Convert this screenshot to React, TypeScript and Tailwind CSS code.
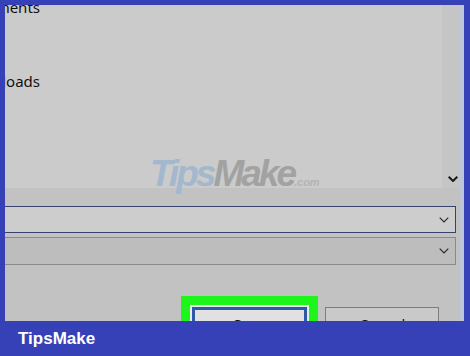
import React from "react";

const Chevron = ({ bold = false }: { bold?: boolean }) => (
  <svg width="10" height="6" viewBox="0 0 10 6" className="block">
    <polyline
      points="0.7,0.7 5,5 9.3,0.7"
      fill="none"
      stroke={bold ? "#1a1a1a" : "#2a2a2a"}
      strokeWidth={bold ? 2 : 1.2}
    />
  </svg>
);

export default function App() {
  return (
    <div className="w-[470px] h-[356px] bg-[#3641b7] flex flex-col overflow-hidden font-['Noto_Sans',sans-serif]">
      <div className="flex h-[321px] shrink-0 pt-[5px] pl-[5px] pr-[6px]">
        <div className="flex-1 flex bg-[#c2c2c2] relative overflow-hidden">
          <div className="flex-1 flex flex-col overflow-hidden">
            {/* list */}
            <div className="h-[183px] shrink-0 flex">
              <div className="flex-1 bg-[#cbcbcb] overflow-hidden flex flex-col text-[15px] leading-[20px] text-[#111]">
                <div className="shrink-0 mt-[-8px] w-[35px] overflow-hidden flex justify-end whitespace-nowrap">
                  <span>Documents</span>
                </div>
                <div className="shrink-0 mt-[54px] w-[35px] overflow-hidden flex justify-end whitespace-nowrap">
                  <span>Downloads</span>
                </div>
              </div>
              <div className="w-[18px] bg-[#c5c5c5] flex flex-col justify-end pl-[6px] pb-[6px]">
                <Chevron bold />
              </div>
            </div>
            <div className="h-[18px] shrink-0" />
            {/* field 1 */}
            <div className="h-[27px] shrink-0 mr-[4px] border border-l-0 border-[#37416f] bg-[#cdcdcd] flex items-center justify-end pr-[6px]">
              <Chevron />
            </div>
            <div className="h-[4px] shrink-0" />
            {/* field 2 */}
            <div className="h-[28px] shrink-0 mr-[4px] border border-l-0 border-[#8a8a8a] bg-[#bdbdbd] flex items-center justify-end pr-[6px]">
              <Chevron />
            </div>
            <div className="h-[31px] shrink-0" />
            {/* buttons */}
            <div className="flex shrink-0 items-start pl-[176px]">
              <div className="w-[137px] shrink-0 bg-[#1ef51a] p-[9px] pb-0">
                <div className="bg-[#e6ecee] p-[2px] pb-0">
                  <div className="h-[30px] border-[3px] border-b-0 border-[#2c5aa6] bg-[#e1e1e1] text-center text-[15px] leading-[20px] text-[#111] pt-[4px]">
                    Save
                  </div>
                </div>
              </div>
              <div className="ml-[7px] shrink-0 mt-[11px] w-[114px] h-[30px] border border-b-0 border-[#7d7d7d] bg-[#c9c9c9] text-center text-[15px] leading-[20px] text-[#111] pt-[6px]">
                Cancel
              </div>
            </div>
          </div>
          <div className="w-[4px] bg-[#bcc6d8]" />
          {/* watermark */}
          <div className="absolute left-[145px] top-[147px] whitespace-nowrap font-['Liberation_Sans',sans-serif] font-bold italic text-[37px] leading-[44px] tracking-[-3px] pointer-events-none">
            <span className="text-[#a3b8cd]">Tips</span>
            <span className="text-[#a2a2a2]">Make</span>
            <span className="text-[11px] tracking-normal text-[#b3b3b3]">.com</span>
          </div>
        </div>
      </div>
      <div className="h-[35px] shrink-0 flex items-center pl-[18px] pt-[1px] font-['Liberation_Sans',sans-serif] font-bold text-[17px] text-white">
        TipsMake
      </div>
    </div>
  );
}
